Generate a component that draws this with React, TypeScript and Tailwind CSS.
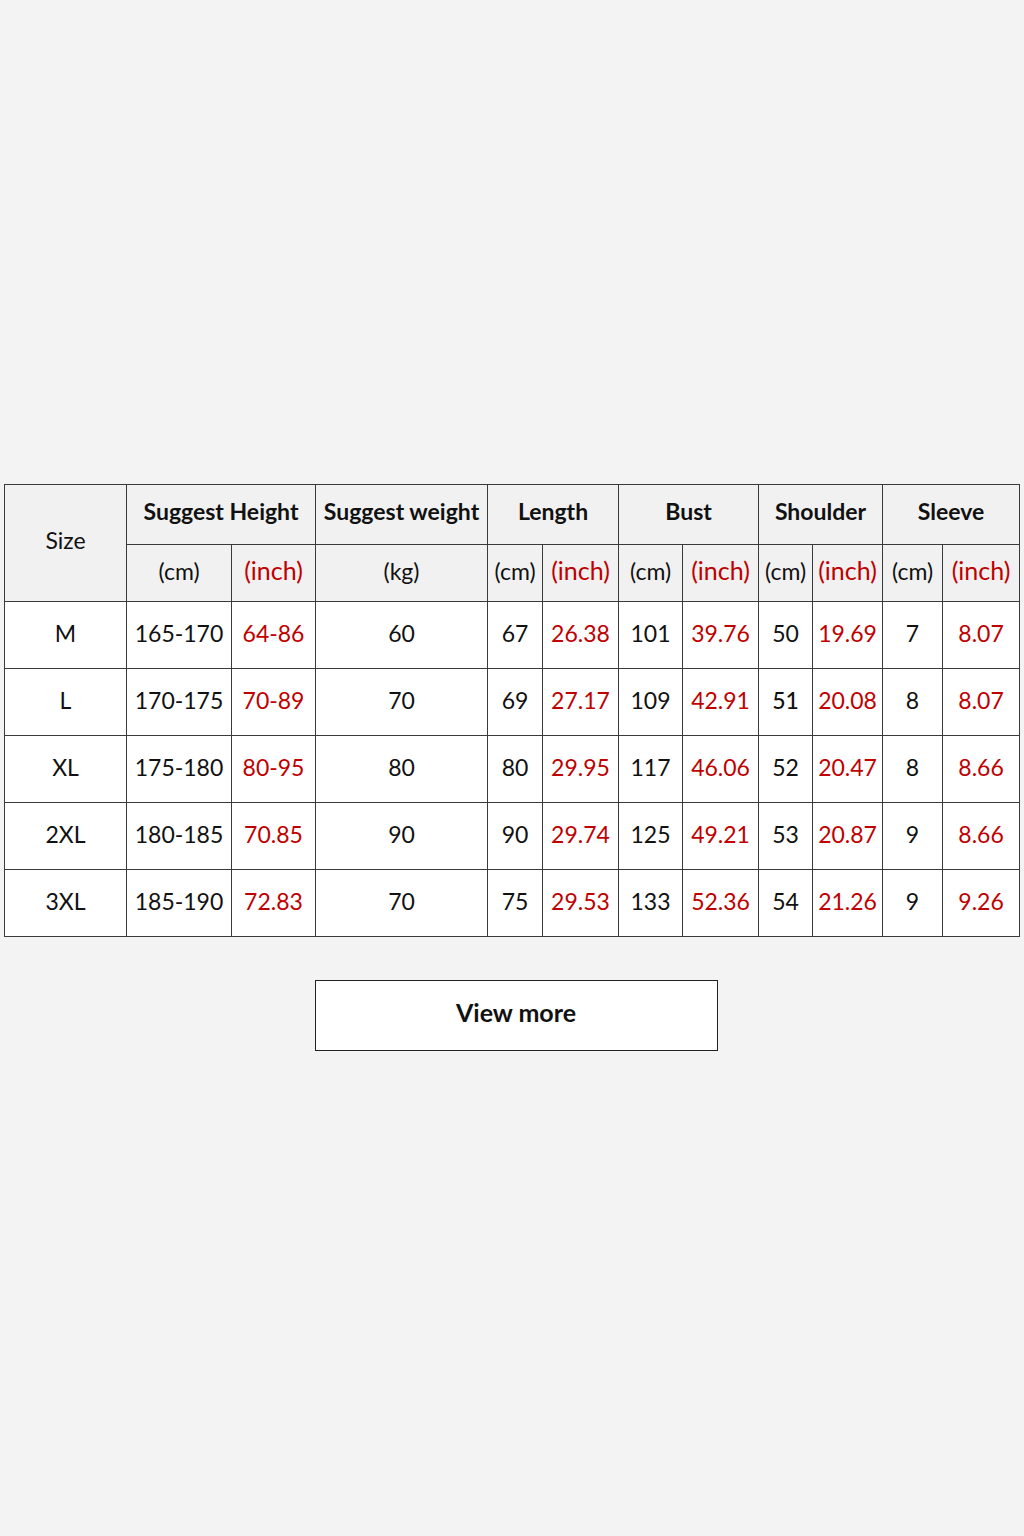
import React from "react";

const rows = [
  ["M", "165-170", "64-86", "60", "67", "26.38", "101", "39.76", "50", "19.69", "7", "8.07"],
  ["L", "170-175", "70-89", "70", "69", "27.17", "109", "42.91", "51", "20.08", "8", "8.07"],
  ["XL", "175-180", "80-95", "80", "80", "29.95", "117", "46.06", "52", "20.47", "8", "8.66"],
  ["2XL", "180-185", "70.85", "90", "90", "29.74", "125", "49.21", "53", "20.87", "9", "8.66"],
  ["3XL", "185-190", "72.83", "70", "75", "29.53", "133", "52.36", "54", "21.26", "9", "9.26"],
];

const widthCls = [
  "w-[122px]",
  "w-[105px]",
  "w-[84px]",
  "w-[172px]",
  "w-[55px]",
  "w-[76px]",
  "w-[64px]",
  "w-[76px]",
  "w-[54px]",
  "w-[70px]",
  "w-[60px]",
  "w-[77px]",
];
const redCols = new Set([2, 5, 7, 9, 11]);

const cell = "border border-[#3a3a3a] text-center align-middle p-0 whitespace-nowrap font-['Lato',sans-serif]";
const top = `${cell} font-bold text-[23px] pb-[6px]`;
const cm = `${cell} font-normal text-[23px] pb-[4px]`;
const inch = `${cell} font-normal text-[25px] pb-[4px] text-[#c00000]`;

export default function App() {
  return (
    <div className="min-h-[1536px] w-[1024px] bg-[#f3f3f3] pt-[484px] pl-[4px]">
      <table className="table-fixed border-collapse w-[1015px]">
        <colgroup>
          {widthCls.map((w, i) => (
            <col key={i} className={w} />
          ))}
        </colgroup>
        <thead className="bg-[#f1f1f1] text-[#111]">
          <tr className="h-[60px]">
            <th rowSpan={2} className={`${cell} font-normal text-[23px] pb-[6px]`}>
              Size
            </th>
            <th colSpan={2} className={top}>
              Suggest Height
            </th>
            <th className={top}>Suggest weight</th>
            <th colSpan={2} className={top}>
              Length
            </th>
            <th colSpan={2} className={top}>
              Bust
            </th>
            <th colSpan={2} className={top}>
              Shoulder
            </th>
            <th colSpan={2} className={top}>
              Sleeve
            </th>
          </tr>
          <tr className="h-[57px]">
            <th className={cm}>(cm)</th>
            <th className={inch}>(inch)</th>
            <th className={cm}>(kg)</th>
            <th className={cm}>(cm)</th>
            <th className={inch}>(inch)</th>
            <th className={cm}>(cm)</th>
            <th className={inch}>(inch)</th>
            <th className={cm}>(cm)</th>
            <th className={inch}>(inch)</th>
            <th className={cm}>(cm)</th>
            <th className={inch}>(inch)</th>
          </tr>
        </thead>
        <tbody className="bg-white">
          {rows.map((r, ri) => (
            <tr key={ri} className="h-[67px]">
              {r.map((c, ci) => (
                <td
                  key={ci}
                  className={`${cell} text-[23px] pb-[4px] ${
                    redCols.has(ci) ? "text-[#c00000]" : "text-[#111]"
                  } ${ri === 1 && ci === 8 ? "font-medium" : "font-normal"}`}
                >
                  {c}
                </td>
              ))}
            </tr>
          ))}
        </tbody>
      </table>
      <div className="flex justify-center mt-[43px] pl-[4px]">
        <button className="w-[403px] h-[71px] bg-white border border-[#222] text-[25px] font-bold text-[#111] pb-[6px] font-['Lato',sans-serif]">
          View more
        </button>
      </div>
    </div>
  );
}
